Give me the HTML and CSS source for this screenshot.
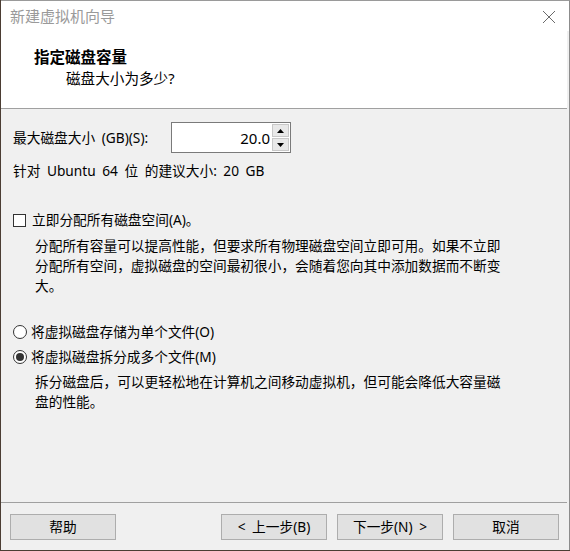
FILE: index.html
```html
<!DOCTYPE html>
<html lang="zh-CN">
<head>
<meta charset="utf-8">
<title>新建虚拟机向导</title>
<link rel="stylesheet" href="styles.css">
</head>
<body>
<div class="window">
  <div class="titlebar">
    <span class="title">新建虚拟机向导</span>
    <svg class="close" width="14" height="14" viewBox="0 0 14 14"><path d="M1 1 L13 13 M13 1 L1 13" stroke="#6a6a6a" stroke-width="1" fill="none"/></svg>
  </div>
  <div class="header">
    <div class="h1">指定磁盘容量</div>
    <div class="h2">磁盘大小为多少?</div>
  </div>
  <div class="content">
    <div class="size-row">
      <span class="label">最大磁盘大小 (GB)(S):</span>
      <div class="spin">
        <div class="spin-value">20.0</div>
        <div class="spin-btns">
          <div class="spin-btn"><svg width="7" height="4" viewBox="0 0 7 4"><path d="M3.5 0 L7 4 L0 4 Z" fill="#000"/></svg></div>
          <div class="spin-btn"><svg width="7" height="4" viewBox="0 0 7 4"><path d="M0 0 L7 0 L3.5 4 Z" fill="#000"/></svg></div>
        </div>
      </div>
    </div>
    <div class="recommend">针对 Ubuntu 64 位 的建议大小: 20 GB</div>
    <div class="option check-row"><span class="checkbox"></span><span>立即分配所有磁盘空间(A)。</span></div>
    <p class="desc">分配所有容量可以提高性能，但要求所有物理磁盘空间立即可用。如果不立即分配所有空间，虚拟磁盘的空间最初很小，会随着您向其中添加数据而不断变大。</p>
    <div class="option radio-row first"><span class="radio"></span><span>将虚拟磁盘存储为单个文件(O)</span></div>
    <div class="option radio-row second"><span class="radio checked"></span><span>将虚拟磁盘拆分成多个文件(M)</span></div>
    <p class="desc desc2">拆分磁盘后，可以更轻松地在计算机之间移动虚拟机，但可能会降低大容量磁盘的性能。</p>
  </div>
  <div class="footer">
    <button class="btn">帮助</button>
    <div class="spacer"></div>
    <button class="btn">&lt; 上一步(B)</button>
    <button class="btn">下一步(N) &gt;</button>
    <button class="btn">取消</button>
  </div>
</div>
</body>
</html>
```

FILE: styles.css
```css
html, body {
  margin: 0;
  padding: 0;
  background: #4b3d33;
  width: 570px;
  height: 551px;
  overflow: hidden;
}
body {
  font-family: "Noto Sans", "Noto Sans CJK SC", sans-serif;
  font-size: 13.7px;
  word-spacing: 3px;
  color: #000;
}
.window {
  margin-left: 1px;
  width: 569px;
  height: 550px;
  box-sizing: border-box;
  border-top: 1px solid #9a9a9a;
  border-right: 1px solid #8c8c8c;
  background: #f0f0f0;
  display: flex;
  flex-direction: column;
}
.titlebar {
  height: 30px;
  background: #fff;
  display: flex;
  align-items: center;
  justify-content: space-between;
  padding: 0 13px 0 9px;
}
.title {
  font-size: 15px;
  color: #9a9a9a;
  line-height: 20px;
}
.close {
  display: block;
  margin-top: 2px;
}
.header {
  background: #fff;
  height: 78px;
  box-sizing: border-box;
  padding: 16px 0 0 33px;
  border-bottom: 1px solid #a0a0a0;
  margin-right: 2px;
}
.header .h1 {
  font-size: 15.5px;
  font-weight: bold;
  line-height: 20px;
}
.header .h2 {
  font-size: 14.6px;
  line-height: 20px;
  margin: 1px 0 0 32px;
}
.content {
  flex: 1;
  padding: 13px 0 0 12px;
}
.size-row {
  display: flex;
  align-items: center;
  height: 31px;
}
.label {
  line-height: 20px;
  width: 158px;
}
.spin {
  width: 120px;
  height: 31px;
  box-sizing: border-box;
  border: 1px solid #7a7a7a;
  background: #fff;
  display: flex;
  align-items: center;
}
.spin-value {
  flex: 1;
  text-align: right;
  font-size: 15px;
  padding-right: 2px;
}
.spin-btns {
  display: flex;
  flex-direction: column;
  gap: 1px;
  margin-right: 1px;
}
.spin-btn {
  width: 17px;
  height: 13px;
  box-sizing: border-box;
  background: #e8e8e8;
  border: 1px solid #c8c8c8;
  display: flex;
  align-items: center;
  justify-content: center;
}
.spin-btn svg { display: block; }
.recommend {
  line-height: 20px;
  margin-top: 8px;
}
.option {
  display: flex;
  align-items: center;
  line-height: 20px;
}
.check-row {
  margin-top: 29px;
}
.checkbox {
  width: 13px;
  height: 13px;
  box-sizing: border-box;
  border: 1px solid #333;
  background: #fff;
  margin-right: 6px;
}
.desc {
  margin: 6px 0 0 22px;
  width: 470px;
  line-height: 20px;
}
.radio-row.first {
  margin-top: 26px;
}
.radio-row.second {
  margin-top: 5px;
}
.radio {
  width: 14px;
  height: 14px;
  box-sizing: border-box;
  border: 1px solid #333;
  border-radius: 50%;
  background: #fff;
  margin-right: 4px;
  display: flex;
  align-items: center;
  justify-content: center;
}
.radio.checked::after {
  content: "";
  width: 8px;
  height: 8px;
  border-radius: 50%;
  background: #333;
}
.desc2 {
  margin-top: 5px;
}
.footer {
  border-top: 1px solid #a0a0a0;
  margin-right: 2px;
  padding: 11px 8px 10px 9px;
  display: flex;
  gap: 10px;
}
.spacer {
  flex: 1;
}
.btn {
  width: 106px;
  height: 26px;
  box-sizing: border-box;
  background: #e1e1e1;
  border: 1px solid #adadad;
  font-family: inherit;
  font-size: 13.7px;
  word-spacing: 3px;
  color: #000;
  padding: 0;
  line-height: 20px;
}
```
